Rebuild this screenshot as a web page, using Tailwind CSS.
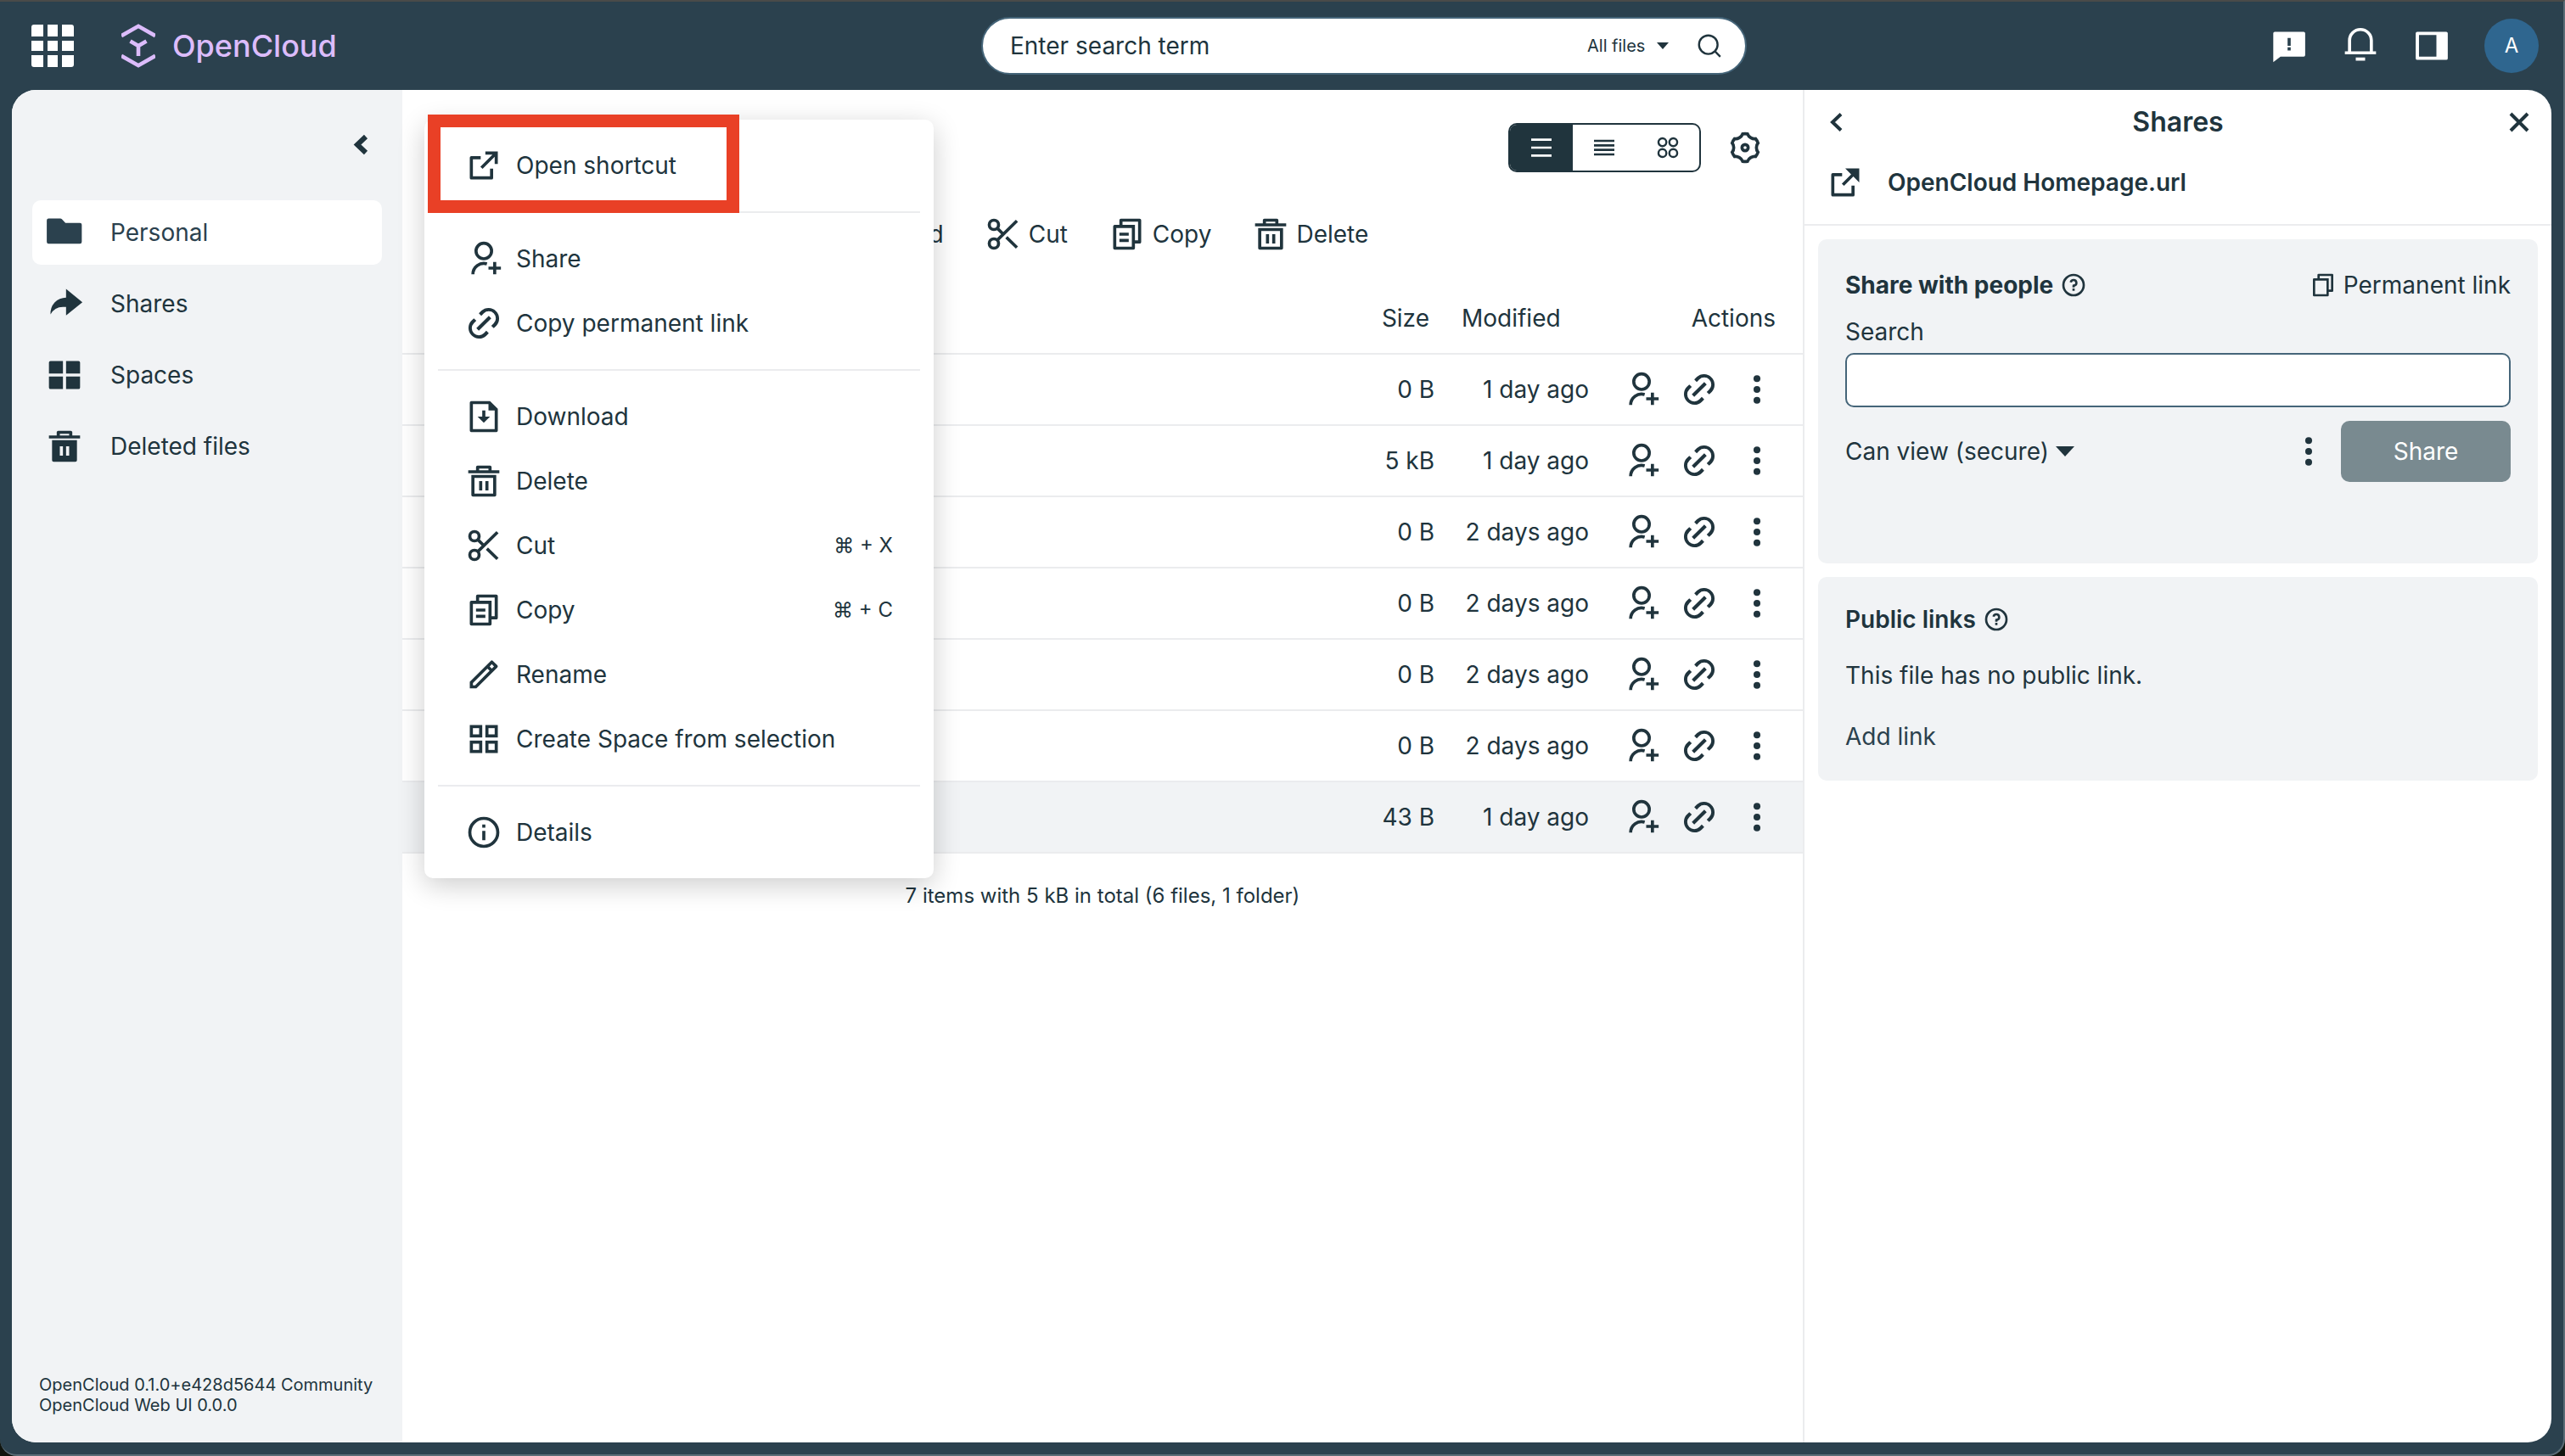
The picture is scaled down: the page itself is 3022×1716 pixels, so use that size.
<!DOCTYPE html>
<html lang="en">
<head>
<meta charset="utf-8">
<meta name="viewport" content="width=device-width, initial-scale=1">
<title>Personal - OpenCloud</title>
<script src="https://cdn.jsdelivr.net/npm/@tailwindcss/browser@4"></script>
</head>
<body class="bg-[#10150f] font-['Inter',sans-serif] text-[28px] leading-10 text-[#20343d]">

<svg class="hidden" aria-hidden="true">
  <symbol id="user-add" viewBox="0 0 24 24"><g fill="none" stroke="currentColor" stroke-width="2"><circle cx="12" cy="7" r="5"/><path d="M5 22a7 7 0 0 1 9-6.7M19 14v8M15 18h8"/></g></symbol>
  <symbol id="link" viewBox="1.4 1.4 21.2 21.2"><path fill="currentColor" d="M17.66 14.83l-1.42-1.42L17.66 12a4 4 0 1 0-5.66-5.66l-1.41 1.42-1.42-1.42 1.42-1.41a6 6 0 0 1 8.48 8.48l-1.41 1.42zm-2.83 2.83l-1.42 1.41a6 6 0 0 1-8.48-8.48l1.41-1.42 1.42 1.42L6.34 12A4 4 0 1 0 12 17.66l1.41-1.42 1.42 1.42zm0-9.9l1.41 1.41-7.07 7.07-1.41-1.41 7.07-7.07z"/></symbol>
  <symbol id="dots" viewBox="0 0 24 24"><g fill="currentColor"><circle cx="12" cy="5" r="2.200"/><circle cx="12" cy="12" r="2.200"/><circle cx="12" cy="19" r="2.200"/></g></symbol>
  <symbol id="external" viewBox="0 0 24 24"><path fill="currentColor" d="M10 6v2H5v11h11v-5h2v6a1 1 0 0 1-1 1H4a1 1 0 0 1-1-1V7a1 1 0 0 1 1-1h6zm11-3v8h-2V6.41l-7.79 7.8-1.42-1.42L17.58 5H13V3h8z"/></symbol>
  <symbol id="external-fill" viewBox="0 0 24 24"><path fill="currentColor" d="M10 6v2H5v11h11v-5h2v6a1 1 0 0 1-1 1H4a1 1 0 0 1-1-1V7a1 1 0 0 1 1-1h6zm11-3v9l-3.79-3.79-6 6-1.42-1.42 6-6L12 3h9z"/></symbol>
  <symbol id="download" viewBox="0 0 24 24"><path fill="currentColor" d="M13 12h3l-4 4-4-4h3V8h2v4zm2-8H5v16h14V8h-4V4zM3 3a1 1 0 0 1 1-1h12l5 5v14a1 1 0 0 1-1 1H4a1 1 0 0 1-1-1V3z"/></symbol>
  <symbol id="trash" viewBox="0 0 24 24"><path fill="currentColor" fill-rule="evenodd" d="M4 8h16v13a1 1 0 0 1-1 1H5a1 1 0 0 1-1-1V8zm2 2v10h12V10H6zm3 2h2v6H9v-6zm4 0h2v6h-2v-6zM7 5V3a1 1 0 0 1 1-1h8a1 1 0 0 1 1 1v2h5v2H2V5h5zm2-1v1h6V4H9z"/></symbol>
  <symbol id="trash-fill" viewBox="0 0 24 24"><path fill="currentColor" fill-rule="evenodd" d="M4 8h16v13a1 1 0 0 1-1 1H5a1 1 0 0 1-1-1V8zm5 4v6h2v-6H9zm4 0v6h2v-6h-2zM7 5V3a1 1 0 0 1 1-1h8a1 1 0 0 1 1 1v2h5v2H2V5h5zm2-1v1h6V4H9z"/></symbol>
  <symbol id="cut" viewBox="0 0 24 24"><g fill="none" stroke="currentColor" stroke-width="2"><circle cx="6" cy="6" r="3"/><circle cx="6" cy="18" r="3"/><path d="M8.100 8.100 12 12M8.100 15.900 20.800 3.400M14 14l6.800 6.600"/></g></symbol>
  <symbol id="copy" viewBox="0 0 24 24"><path fill="currentColor" fill-rule="evenodd" d="M7 6V3a1 1 0 0 1 1-1h12a1 1 0 0 1 1 1v14a1 1 0 0 1-1 1h-3v3a1 1 0 0 1-1 1H4a1 1 0 0 1-1-1V7a1 1 0 0 1 1-1h3zM5 8v12h10V8H5zm4-2h8v10h2V4H9v2zm-2 5h6v2H7v-2zm0 4h6v2H7v-2z"/></symbol>
  <symbol id="copy-plain" viewBox="0 0 24 24"><path fill="currentColor" fill-rule="evenodd" d="M7 6V3a1 1 0 0 1 1-1h12a1 1 0 0 1 1 1v14a1 1 0 0 1-1 1h-3v3a1 1 0 0 1-1 1H4a1 1 0 0 1-1-1V7a1 1 0 0 1 1-1h3zM5 8v12h10V8H5zm4-2h8v10h2V4H9v2z"/></symbol>
  <symbol id="pencil" viewBox="0 0 24 24"><path fill="currentColor" d="M15.73 9.58l-1.42-1.42L5 17.48v1.41h1.41l9.32-9.31zm1.41-1.42l1.42-1.41-1.42-1.42-1.41 1.42 1.41 1.41zM7.24 20.89H3v-4.24L16.44 3.21a1 1 0 0 1 1.41 0l2.83 2.83a1 1 0 0 1 0 1.41L7.24 20.9z"/></symbol>
  <symbol id="grid" viewBox="0 0 24 24"><g fill="none" stroke="currentColor" stroke-width="2"><rect x="4" y="4" width="6" height="6"/><rect x="14" y="4" width="6" height="6"/><rect x="4" y="14" width="6" height="6"/><rect x="14" y="14" width="6" height="6"/></g></symbol>
  <symbol id="info" viewBox="0 0 24 24"><circle cx="12" cy="12" r="9" fill="none" stroke="currentColor" stroke-width="2"/><path fill="currentColor" d="M11 7h2v2h-2zM11 11h2v6h-2z"/></symbol>
  <symbol id="help" viewBox="0 0 24 24"><circle cx="12" cy="12" r="9" fill="none" stroke="currentColor" stroke-width="2"/><path fill="currentColor" d="M11 15h2v2h-2v-2zm2-1.640V14h-2v-1.500a1 1 0 0 1 1-1 1.500 1.500 0 1 0-1.470-1.790l-1.960-.39A3.500 3.500 0 1 1 13 13.360z"/></symbol>
</svg>

<div class="flex min-h-screen flex-col rounded-b-[20px] border-t-2 border-r-2 border-b-2 border-t-[#4a4b49] border-r-[#5a6c76] border-b-[#5a6c76] bg-[#2b414e]">

  <header class="grid h-[104px] grid-cols-[1156fr_902fr_962fr] items-center">
    <div class="flex items-center gap-14 pl-[37px]">
      <button type="button" aria-label="Application switcher">
        <svg class="block size-[50px]" viewBox="0 0 50 50" fill="#fff"><path d="M3 0h11v14H0V3a3 3 0 0 1 3-3zM19 0h12v14H19zM36 0h11a3 3 0 0 1 3 3v11H36zM0 19h14v12H0zM19 19h12v12H19zM36 19h14v12H36zM0 36h14v14H3a3 3 0 0 1-3-3zM19 36h12v14H19zM36 36h14v11a3 3 0 0 1-3 3H36z"/></svg>
      </button>
      <a href="#" class="flex items-center gap-5 text-4xl font-medium text-[#dcbcfb]">
        <svg class="h-[52px] w-10" viewBox="0 0 40 52" fill="none" stroke="currentColor" stroke-width="4.600"><path d="M0 14.200 20 2.800l20 11.400M0 37.800 20 49.200l20-11.400M10.500 20.500 20 26l9.500-5.500M20 26v12"/></svg>
        OpenCloud
      </a>
    </div>
    <form class="flex h-[68px] items-center rounded-full border-2 border-[#456579] bg-white pr-[26px] pl-8" role="search">
      <input type="search" aria-label="Enter search term" placeholder="Enter search term" class="min-w-0 flex-1 bg-transparent outline-none placeholder:text-[#20343d] placeholder:opacity-100">
      <select aria-label="Search scope" class="w-[82px] appearance-none bg-transparent text-xl outline-none"><option>All files</option></select>
      <svg class="h-2 w-[14px]" viewBox="0 0 14 8" aria-hidden="true"><path fill="#20343d" d="M0 0h14L7 8z"/></svg>
      <button type="submit" aria-label="Search" class="ml-8">
        <svg class="block size-8" viewBox="0 0 24 24" fill="none" stroke="currentColor" stroke-width="1.800"><circle cx="11" cy="11" r="8.200"/><path d="m17 17 4.600 4.600"/></svg>
      </button>
    </form>
    <div class="flex items-center justify-end gap-10 pr-[29px] text-white">
      <button type="button" aria-label="Feedback"><svg class="block size-11" viewBox="0 0 24 24"><path fill="currentColor" fill-rule="evenodd" d="M6.450 19 1.800 22.500V4a1 1 0 0 1 1-1h18.500a1 1 0 0 1 1 1v14a1 1 0 0 1-1 1zM11 13v2h2v-2zm0-6v5h2V7z"/></svg></button>
      <button type="button" aria-label="Notifications"><svg class="block size-11" viewBox="0 1.500 24 24"><path fill="currentColor" fill-rule="evenodd" d="M20 17h2v2H2v-2h2v-7a8 8 0 0 1 16 0v7zm-2 0v-7a6 6 0 0 0-12 0v7h12zm-9 4h6v2H9v-2z"/></svg></button>
      <button type="button" aria-label="Toggle right sidebar"><svg class="block size-11" viewBox="0 0 24 24"><path fill="currentColor" fill-rule="evenodd" d="M2.700 3h18.600a1 1 0 0 1 1 1v16a1 1 0 0 1-1 1H2.700a1 1 0 0 1-1-1V4a1 1 0 0 1 1-1zM3.800 5v14H15V5z"/></svg></button>
      <button type="button" aria-label="My account" class="size-16 rounded-full bg-[#2f668f] text-2xl">A</button>
    </div>
  </header>

  <div class="mr-[14px] mb-[14px] ml-[14px] flex flex-1 overflow-hidden rounded-[28px] bg-white">

    <aside class="flex w-[460px] shrink-0 flex-col bg-[#f1f3f5] px-6 pb-8">
      <button type="button" aria-label="Collapse sidebar" class="mt-11 mr-1 self-end">
        <svg class="block size-10" viewBox="0 0 40 40" fill="none" stroke="currentColor" stroke-width="6"><path d="M25 11 15 20.500l10 9.500"/></svg>
      </button>
      <nav class="mt-[46px] flex flex-col gap-2">
        <a href="#" class="flex h-[76px] items-center gap-8 rounded-[10px] bg-white px-4 text-[#2b414e]">
          <svg class="size-11" viewBox="0 0 24 24"><path fill="currentColor" d="M1.800 3h7.500a1.500 1.500 0 0 1 1 .4L12.600 5.800h9.300a1.200 1.200 0 0 1 1.200 1.200v11a1.200 1.200 0 0 1-1.200 1.200H1.800A1.200 1.200 0 0 1 .6 18V4.200A1.200 1.200 0 0 1 1.800 3z"/></svg>Personal</a>
        <a href="#" class="flex h-[76px] items-center gap-8 px-4"><svg class="size-11" viewBox="0 0 24 24"><path fill="currentColor" d="M13 14h-2a9 9 0 0 0-7.970 4.810A10 10 0 0 1 13 8V2.500L23.500 11 13 19.500V14z"/></svg>Shares</a>
        <a href="#" class="flex h-[76px] items-center gap-8 px-4"><svg class="size-11" viewBox="0 0 24 24"><path fill="currentColor" d="M3 3h8v8H2V4a1 1 0 0 1 1-1zM13 3h8a1 1 0 0 1 1 1v7h-9zM2 13h9v8H3a1 1 0 0 1-1-1zM13 13h9v7a1 1 0 0 1-1 1h-8z"/></svg>Spaces</a>
        <a href="#" class="flex h-[76px] items-center gap-8 px-4"><svg class="size-11"><use href="#trash-fill"/></svg>Deleted files</a>
      </nav>
      <p class="mt-auto pl-2 text-xl leading-6 whitespace-nowrap">OpenCloud 0.1.0+e428d5644 Community<br>OpenCloud Web UI 0.0.0</p>
    </aside>

    <main class="min-w-0 flex-1">
      <div class="flex items-center justify-end gap-[30px] pt-[39px] pr-[46px]">
        <div class="flex h-[58px] w-[227px] overflow-hidden rounded-[10px] border-2 border-[#20343d]">
          <button type="button" aria-label="Table view" class="flex flex-1 items-center justify-center bg-[#20343d] text-white"><svg class="size-8" viewBox="0 0 24 24"><path fill="currentColor" d="M3 4h18v2H3zM3 11h18v2H3zM3 18h18v2H3z"/></svg></button>
          <button type="button" aria-label="Condensed table view" class="flex flex-1 items-center justify-center"><svg class="size-8" viewBox="0 0 24 24"><path fill="currentColor" d="M3 5h18v2H3zM3 9h18v2H3zM3 13h18v2H3zM3 17h18v2H3z"/></svg></button>
          <button type="button" aria-label="Tiles view" class="flex flex-1 items-center justify-center"><svg class="size-8" viewBox="0 0 24 24" fill="none" stroke="currentColor" stroke-width="1.800"><circle cx="7.200" cy="7.200" r="3.500"/><circle cx="16.800" cy="7.200" r="3.500"/><circle cx="7.200" cy="16.800" r="3.500"/><circle cx="16.800" cy="16.800" r="3.500"/></svg></button>
        </div>
        <button type="button" aria-label="Display options"><svg class="block size-11" viewBox="0 0 24 24" fill="none" stroke="currentColor" stroke-width="2"><path d="M20.300 9A8.800 8.800 0 0 0 18.750 6.300C16.800 6.700 14.300 5.250 13.560 3.200a9 9 0 0 0-3.120 0C9.700 5.250 7.200 6.700 5.250 6.300A8.800 8.800 0 0 0 3.700 9C5.050 10.600 5.050 13.400 3.700 15a8.800 8.800 0 0 0 1.550 2.700c1.950-.4 4.450 1.050 5.190 3.100a9 9 0 0 0 3.120 0c.74-2.050 3.240-3.500 5.190-3.100A8.800 8.800 0 0 0 20.300 15C18.950 13.400 18.950 10.600 20.300 9z"/><circle cx="12" cy="12" r="2"/></svg></button>
      </div>

      <div class="mt-[51px] flex h-11 items-center gap-12 pl-[453px]">
        <button type="button" class="flex items-center gap-2"><svg class="size-11"><use href="#download"/></svg>Download</button>
        <button type="button" class="flex items-center gap-2"><svg class="size-11"><use href="#cut"/></svg>Cut</button>
        <button type="button" class="flex items-center gap-2"><svg class="size-11"><use href="#copy"/></svg>Copy</button>
        <button type="button" class="flex items-center gap-2"><svg class="size-11"><use href="#trash"/></svg>Delete</button>
      </div>

      <table class="mt-9 w-full table-fixed border-separate border-spacing-0">
        <thead>
          <tr class="h-[84px]">
            <th class="border-b-2 border-[#ebecee]" aria-label="Name"></th>
            <th class="w-[140px] border-b-2 border-[#ebecee] pr-[22px] text-right font-normal">Size</th>
            <th class="w-[182px] border-b-2 border-[#ebecee] pl-4 text-left font-normal">Modified</th>
            <th class="w-[236px] border-b-2 border-[#ebecee] pr-8 text-right font-normal">Actions</th>
          </tr>
        </thead>
        <tbody id="files"></tbody>
      </table>
      <p class="mt-[34px] text-center text-2xl">7 items with 5 kB in total (6 files, 1 folder)</p>
    </main>

    <aside class="w-[882px] shrink-0 border-l-2 border-[#ebecee]">
      <div class="border-b-2 border-[#ebecee] pb-4">
        <div class="flex h-[76px] items-center justify-between px-[22px]">
          <button type="button" aria-label="Back"><svg class="block size-8" viewBox="0 0 32 32" fill="none" stroke="currentColor" stroke-width="4"><path d="M21 6.500 11 16l10 9.500"/></svg></button>
          <h2 class="text-[32px] font-semibold">Shares</h2>
          <button type="button" aria-label="Close"><svg class="block size-8" viewBox="0 0 32 32" fill="none" stroke="currentColor" stroke-width="4"><path d="m6 6 20 20M26 6 6 26"/></svg></button>
        </div>
        <div class="flex h-[66px] items-center gap-7 pl-[26px]">
          <svg class="size-11"><use href="#external-fill"/></svg>
          <h3 class="font-semibold">OpenCloud Homepage.url</h3>
        </div>
      </div>

      <div class="flex flex-col gap-4 p-4">
        <section class="rounded-[10px] bg-[#f1f3f5] px-8 pt-8 pb-24">
          <div class="flex h-11 items-center">
            <h4 class="font-bold">Share with people</h4>
            <button type="button" aria-label="Help on sharing" class="ml-2"><svg class="block size-8"><use href="#help"/></svg></button>
            <button type="button" class="ml-auto flex items-center gap-2"><svg class="size-8"><use href="#copy-plain"/></svg>Permanent link</button>
          </div>
          <label for="invite" class="mt-3 flex h-[42px] items-center">Search</label>
          <input id="invite" type="text" class="mt-1 block h-16 w-full rounded-[10px] border-2 border-[#456579] bg-white px-4 outline-none">
          <div class="mt-4 flex h-[72px] items-center">
            <button type="button" class="flex items-center gap-2">Can view (secure)<svg class="h-3 w-[22px]" viewBox="0 0 22 12"><path fill="currentColor" d="M0 0h22L11 12z"/></svg></button>
            <button type="button" aria-label="More options" class="ml-auto"><svg class="block size-11"><use href="#dots"/></svg></button>
            <button type="button" class="ml-4 h-full w-[200px] rounded-[10px] bg-[#798a90] text-white">Share</button>
          </div>
        </section>
        <section class="rounded-[10px] bg-[#f1f3f5] px-8 pt-7 pb-8">
          <div class="flex h-11 items-center">
            <h4 class="font-semibold">Public links</h4>
            <button type="button" aria-label="Help on public links" class="ml-2"><svg class="block size-8"><use href="#help"/></svg></button>
          </div>
          <p class="mt-6">This file has no public link.</p>
          <button type="button" class="mt-8 block text-[#2b414e]">Add link</button>
        </section>
      </div>
    </aside>
  </div>
</div>

<div role="menu" class="absolute top-[141px] left-[500px] w-[600px] rounded-[10px] bg-white px-4 shadow-[0_8px_32px_rgba(0,0,0,0.2)]">
  <div class="py-4">
    <button type="button" role="menuitem" class="flex h-[76px] w-full items-center gap-4 px-8"><svg class="size-11"><use href="#external"/></svg>Open shortcut</button>
  </div>
  <div class="border-t-2 border-[#ebecee] py-4">
    <button type="button" role="menuitem" class="flex h-[76px] w-full items-center gap-4 px-8"><svg class="size-11"><use href="#user-add"/></svg>Share</button>
    <button type="button" role="menuitem" class="flex h-[76px] w-full items-center gap-4 px-8"><svg class="size-11"><use href="#link"/></svg>Copy permanent link</button>
  </div>
  <div class="border-t-2 border-[#ebecee] py-4">
    <button type="button" role="menuitem" class="flex h-[76px] w-full items-center gap-4 px-8"><svg class="size-11"><use href="#download"/></svg>Download</button>
    <button type="button" role="menuitem" class="flex h-[76px] w-full items-center gap-4 px-8"><svg class="size-11"><use href="#trash"/></svg>Delete</button>
    <button type="button" role="menuitem" class="flex h-[76px] w-full items-center gap-4 px-8"><svg class="size-11"><use href="#cut"/></svg>Cut<kbd class="ml-auto font-['Inter',sans-serif] text-2xl">⌘ + X</kbd></button>
    <button type="button" role="menuitem" class="flex h-[76px] w-full items-center gap-4 px-8"><svg class="size-11"><use href="#copy"/></svg>Copy<kbd class="ml-auto font-['Inter',sans-serif] text-2xl">⌘ + C</kbd></button>
    <button type="button" role="menuitem" class="flex h-[76px] w-full items-center gap-4 px-8"><svg class="size-11"><use href="#pencil"/></svg>Rename</button>
    <button type="button" role="menuitem" class="flex h-[76px] w-full items-center gap-4 px-8"><svg class="size-11"><use href="#grid"/></svg>Create Space from selection</button>
  </div>
  <div class="border-t-2 border-[#ebecee] py-4">
    <button type="button" role="menuitem" class="flex h-[76px] w-full items-center gap-4 px-8"><svg class="size-11"><use href="#info"/></svg>Details</button>
  </div>
</div>
<div class="pointer-events-none absolute top-[135px] left-[504px] h-[116px] w-[367px] border-[15px] border-[#e94026]"></div>

<script>
const files = [
  ['0 B', '1 day ago'], ['5 kB', '1 day ago'], ['0 B', '2 days ago'], ['0 B', '2 days ago'],
  ['0 B', '2 days ago'], ['0 B', '2 days ago'], ['43 B', '1 day ago', true],
];
document.getElementById('files').innerHTML = files.map(([size, modified, selected]) => `
  <tr class="h-[84px] ${selected ? 'bg-[#f1f3f5]' : 'bg-white'}">
    <td class="border-b-2 border-[#ebecee]"></td>
    <td class="border-b-2 border-[#ebecee] pr-4 text-right whitespace-nowrap">${size}</td>
    <td class="border-b-2 border-[#ebecee] pr-4 text-right whitespace-nowrap">${modified}</td>
    <td class="border-b-2 border-[#ebecee] pr-8">
      <div class="flex justify-end gap-6">
        <button type="button" aria-label="Share"><svg class="block size-11"><use href="#user-add"/></svg></button>
        <button type="button" aria-label="Copy link"><svg class="block size-11"><use href="#link"/></svg></button>
        <button type="button" aria-label="Show context menu"><svg class="block size-11"><use href="#dots"/></svg></button>
      </div>
    </td>
  </tr>`).join('');
</script>
</body>
</html>
